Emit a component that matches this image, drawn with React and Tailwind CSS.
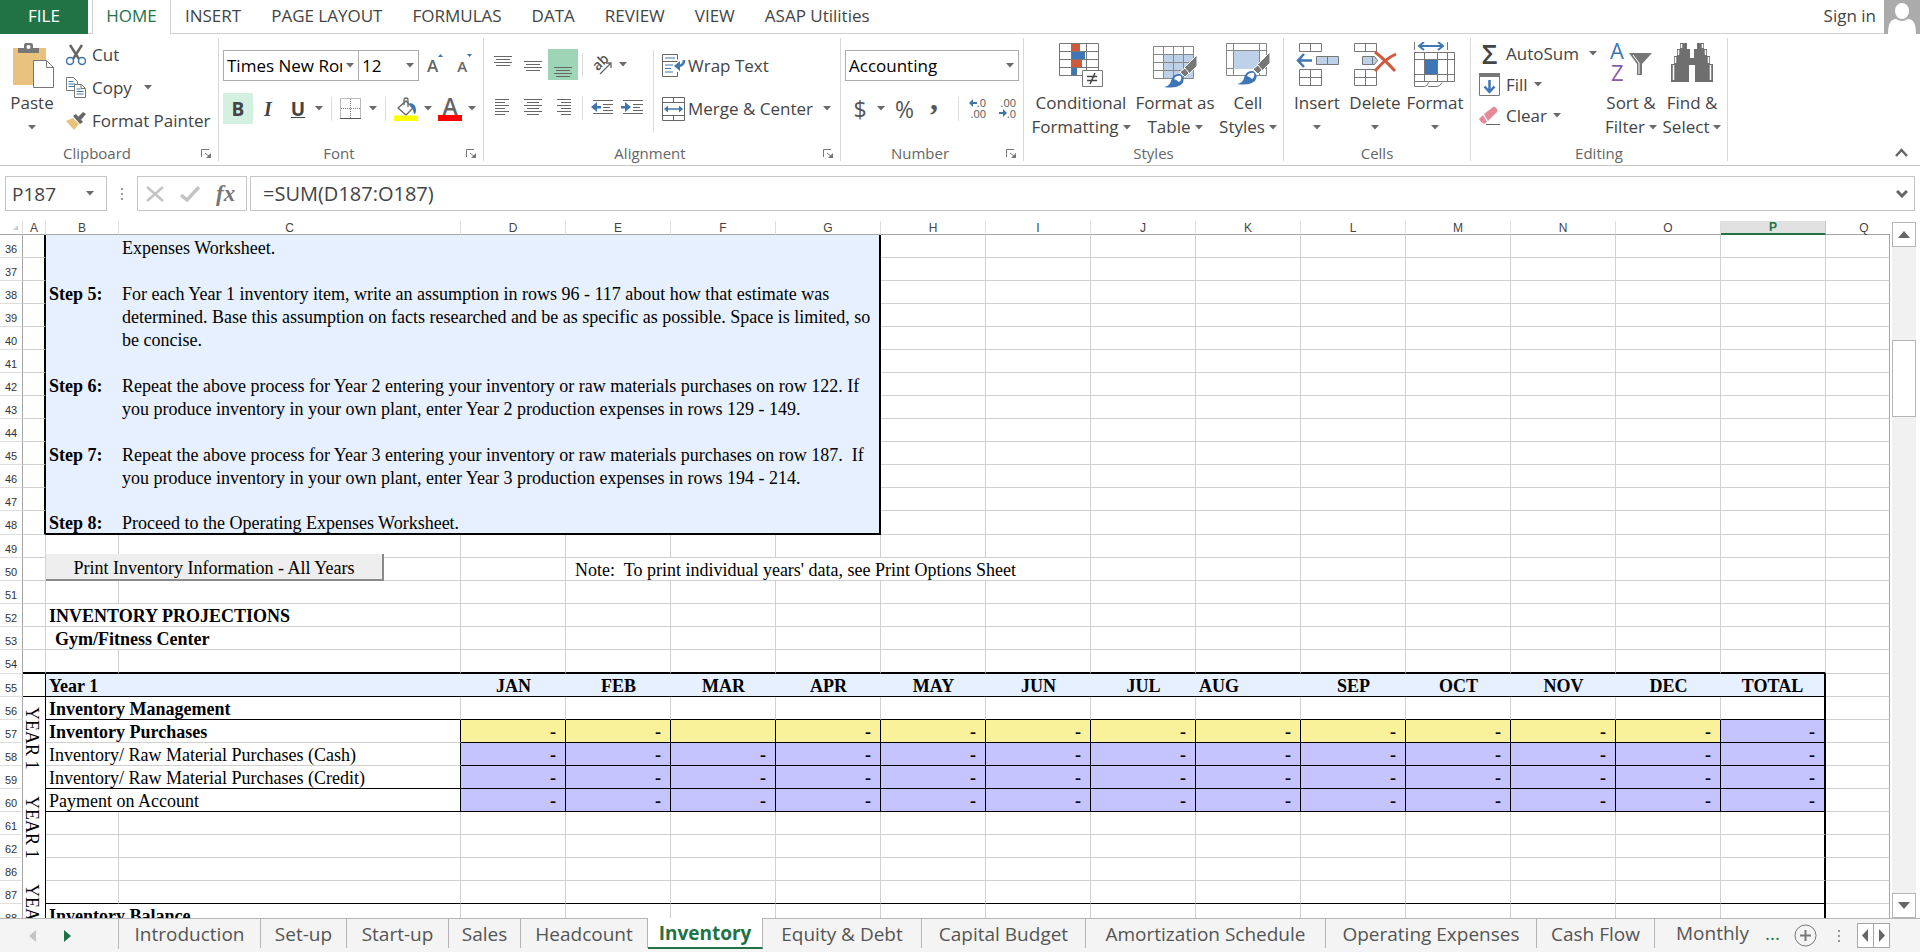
import { useState } from "react";

const ribbonTabs = ["INSERT", "PAGE LAYOUT", "FORMULAS", "DATA", "REVIEW", "VIEW", "ASAP Utilities"];
const columns = ["A", "B", "C", "D", "E", "F", "G", "H", "I", "J", "K", "L", "M", "N", "O", "P", "Q"];
const months = ["JAN", "FEB", "MAR", "APR", "MAY", "JUN", "JUL", "AUG", "SEP", "OCT", "NOV", "DEC", "TOTAL"];

const steps = [
  { row: 36, step: "", text: "Expenses Worksheet." },
  { row: 37, step: "", text: "" },
  { row: 38, step: "Step 5:", text: "For each Year 1 inventory item, write an assumption in rows 96 - 117 about how that estimate was" },
  { row: 39, step: "", text: "determined. Base this assumption on facts researched and be as specific as possible. Space is limited, so" },
  { row: 40, step: "", text: "be concise." },
  { row: 41, step: "", text: "" },
  { row: 42, step: "Step 6:", text: "Repeat the above process for Year 2 entering your inventory or raw materials purchases on row 122. If" },
  { row: 43, step: "", text: "you produce inventory in your own plant, enter Year 2 production expenses in rows 129 - 149." },
  { row: 44, step: "", text: "" },
  { row: 45, step: "Step 7:", text: "Repeat the above process for Year 3 entering your inventory or raw materials purchases on row 187.  If" },
  { row: 46, step: "", text: "you produce inventory in your own plant, enter Year 3 production expenses in rows 194 - 214." },
  { row: 47, step: "", text: "" },
  { row: 48, step: "Step 8:", text: "Proceed to the Operating Expenses Worksheet." },
];

const inventoryRows = [
  { row: 57, label: "Inventory Purchases", bold: true, input: true },
  { row: 58, label: "Inventory/ Raw Material Purchases (Cash)" },
  { row: 59, label: "Inventory/ Raw Material Purchases (Credit)", line: true },
  { row: 60, label: "Payment on Account", line: true },
];

const sheetTabs = [
  { name: "Introduction", width: "w-[142px]" },
  { name: "Set-up", width: "w-[86px]" },
  { name: "Start-up", width: "w-[102px]" },
  { name: "Sales", width: "w-[72px]" },
  { name: "Headcount", width: "w-[127px]" },
  { name: "Inventory", width: "w-[115px]" },
  { name: "Equity & Debt", width: "w-[159px]" },
  { name: "Capital Budget", width: "w-[164px]" },
  { name: "Amortization Schedule", width: "w-[240px]" },
  { name: "Operating Expenses", width: "w-[211px]" },
  { name: "Cash Flow", width: "w-[118px]" },
];

function Caret({ className = "" }) {
  return (
    <svg className={`shrink-0 ${className}`} width="8" height="5" viewBox="0 0 8 5" aria-hidden="true">
      <path d="M0 0h8L4 4.5z" fill="#6a6a6a" />
    </svg>
  );
}

function Divider({ className = "" }) {
  return <span className={`h-6 w-px shrink-0 bg-[#dcdcdc] ${className}`} />;
}

function Launcher() {
  return (
    <button aria-label="More options" className="flex w-6 items-center justify-center">
      <svg width="11" height="11" viewBox="0 0 11 11" fill="none" stroke="#777">
        <path d="M.5 9V1.5H8M4 5l5 4" />
        <path d="M10 5v5H5z" fill="#777" stroke="none" />
      </svg>
    </button>
  );
}

function Group({ name, width, launcher, children }) {
  return (
    <section className={`my-1 flex shrink-0 flex-col border-r border-[#d8d8d8] ${width}`}>
      <div className="flex h-[107px]">{children}</div>
      <div className="flex h-4">
        <span className="flex-1 text-center text-[15px] leading-4 text-[#666]">{name}</span>
        {launcher && <Launcher />}
      </div>
    </section>
  );
}

function BigButton({ icon, lines, width }) {
  return (
    <button className={`flex flex-col items-center pt-1 whitespace-nowrap ${width}`}>
      <span className="flex h-[49px] items-start">{icon}</span>
      <span className="leading-6">{lines[0]}</span>
      <span className="flex h-6 items-center gap-1 leading-6">
        {lines[1]}
        <Caret />
      </span>
    </button>
  );
}

function SmallButton({ icon, children, caret, className = "" }) {
  return (
    <button className={`flex items-center whitespace-nowrap ${className}`}>
      {icon}
      {children}
      {caret && <Caret className={caret} />}
    </button>
  );
}

function Picker({ label, value, width }) {
  return (
    <label className={`relative -ml-px flex h-[31px] items-center border border-[#ababab] bg-white ${width}`}>
      <select
        aria-label={label}
        defaultValue={value}
        className="mr-4 h-full w-full appearance-none overflow-hidden pl-[3px] text-black outline-none"
      >
        <option>{value}</option>
      </select>
      <Caret className="pointer-events-none absolute right-1" />
    </label>
  );
}

/* ---------- icons ---------- */

function PasteIcon() {
  return (
    <svg width="44" height="47" viewBox="0 0 44 47">
      <path d="M3 6h33v37H3z" fill="#e8c27e" />
      <path d="M8 11V6h6V3q0-2 2-2h5q2 0 2 2v3h6v5z" fill="#777" />
      <circle cx="18.500" cy="5" r="2" fill="#fff" />
      <path d="M23.500 18.500h13l7 7v20h-20z" fill="#fff" stroke="#777" />
      <path d="M36.500 18.500v7h7" fill="none" stroke="#777" />
    </svg>
  );
}

function CutIcon() {
  return (
    <svg width="20" height="22" viewBox="0 0 20 22" fill="none">
      <path d="M4 1l9 14M16 1L7 15" stroke="#666" strokeWidth="2.500" />
      <circle cx="4" cy="17" r="3.500" stroke="#3f76ad" strokeWidth="1.500" />
      <circle cx="16" cy="17" r="3.500" stroke="#3f76ad" strokeWidth="1.500" />
    </svg>
  );
}

function CopyIcon() {
  return (
    <svg width="20" height="21" viewBox="0 0 20 21" fill="#fff" stroke="#777">
      <path d="M.5.5h7l4 4v9H.5z" />
      <path d="M2.500 4.500h5M2.500 7h7M2.500 9.500h7" stroke="#3f76ad" />
      <path d="M8.500 7.500h7l4 4v9h-11z" />
      <path d="M15 7.500v4h4" fill="none" />
      <path d="M10.500 12h4M10.500 14.500h7M10.500 17h7" stroke="#3f76ad" />
    </svg>
  );
}

function PainterIcon() {
  return (
    <svg width="20" height="18" viewBox="0 0 20 18">
      <path d="M0 9l7-3 6 6-5 6z" fill="#e8c27e" />
      <path d="M7 4l3-2 7 8-3 2z" fill="#666" />
      <path d="M12 5l5-5 3 2-5 6z" fill="#666" />
    </svg>
  );
}

function BordersIcon() {
  return (
    <svg width="21" height="21" viewBox="0 0 21 21" fill="none" stroke="#777">
      <path d="M.5.5h20v20H.5zM10.500 1v20M1 10.500h20" strokeDasharray="1 1" />
      <path d="M0 20.500h21" stroke="#555" />
    </svg>
  );
}

function FillColorIcon() {
  return (
    <svg width="24" height="24" viewBox="0 0 24 24">
      <path d="M4 11l8-7 7 7-7 7z" fill="#fff" stroke="#666" strokeWidth="1.300" />
      <path d="M10 8V3q0-2 2-2t2 2v7" fill="none" stroke="#666" strokeWidth="1.300" />
      <path d="M16 6q6 1 6 7 0 4-2 4-1-6-4-8z" fill="#3f76ad" />
      <path d="M0 18.500h24V24H0z" fill="#ff0" />
    </svg>
  );
}

const alignShapes = {
  top: "M0 3.500h18M2 6.500h14M0 9.500h18M2 12.500h14",
  middle: "M0 8.500h18M2 11.500h14M0 14.500h18M2 17.500h14",
  bottom: "M0 14.500h18M2 17.500h14M0 20.500h18M2 23.500h14",
  left: "M1 3.500h14M1 6.500h10M1 9.500h14M1 12.500h10M1 15.500h14M1 18.500h10",
  center: "M0 3.500h18M3 6.500h12M0 9.500h18M3 12.500h12M0 15.500h18M3 18.500h12",
  right: "M3 3.500h14M7 6.500h10M3 9.500h14M7 12.500h10M3 15.500h14M7 18.500h10",
};

function AlignButton({ kind, active }) {
  return (
    <button
      aria-label={`Align ${kind}`}
      className={`flex h-[31px] w-[30px] items-center justify-center ${active ? "bg-[#9fd5b7]" : ""}`}
    >
      <svg width="18" height="24" viewBox="0 0 18 24" fill="none" stroke="#666">
        <path d={alignShapes[kind]} />
      </svg>
    </button>
  );
}

function OrientationIcon() {
  return (
    <svg width="22" height="22" viewBox="0 0 22 22">
      <text x="4" y="17" fontSize="14" fontWeight="600" fill="#555" fontFamily="Open Sans, sans-serif" transform="rotate(-45 6 14)">
        ab
      </text>
      <path d="M9 20L20 9M20 14V9h-5" fill="none" stroke="#666" strokeWidth="1.300" />
    </svg>
  );
}

function IndentIcon({ right }) {
  return (
    <svg width="22" height="15" viewBox="0 0 22 15">
      <path d="M2 .5h20M12 4.500h10M12 7.500h7M12 10.500h10M2 13.500h20" stroke="#666" />
      {right ? (
        <path d="M0 6h4V2l6 5-6 5V8.500H0z" fill="#3f76ad" />
      ) : (
        <path d="M10 6H6V2L0 7l6 5V8.500h4z" fill="#3f76ad" />
      )}
    </svg>
  );
}

function WrapIcon() {
  return (
    <svg width="24" height="23" viewBox="0 0 24 23" fill="none" stroke="#666">
      <path d="M15.500 18v4.500H.5V.5h15v5M.5 7.500h15" />
      <path d="M3 4h10M3 11h8M3 14.500h6M3 18h8" stroke="#3f76ad" />
      <path d="M22 6q0 6-6 6" stroke="#3f76ad" strokeWidth="2.500" />
      <path d="M18 7v10l-6-5z" fill="#3f76ad" stroke="none" />
    </svg>
  );
}

function MergeIcon() {
  return (
    <svg width="24" height="24" viewBox="0 0 24 24" fill="none" stroke="#666">
      <path d="M.5.5h22v23H.5zM.5 5.500h22M.5 18.500h22M11.500.5v5M11.500 18.500v5" />
      <path d="M4 12h15" stroke="#3f76ad" strokeWidth="1.500" />
      <path d="M2 12l4-3.500v7zM21 12l-4-3.500v7z" fill="#3f76ad" stroke="none" />
    </svg>
  );
}

function DecimalIcon({ decrease }) {
  const arrow = decrease ? "M0 14h4v-3l4 4-4 4v-3H0z" : "M8 4H4V1L0 5l4 4V6h4z";
  return (
    <svg
      className="overflow-visible"
      width="18"
      height="21"
      viewBox="0 0 18 21"
      fontSize="11"
      fill="#555"
      fontFamily="Open Sans, sans-serif"
    >
      <text x="17" y="9" textAnchor="end">{decrease ? ".00" : ".0"}</text>
      <text x="17" y="20" textAnchor="end">{decrease ? ".0" : ".00"}</text>
      <path d={arrow} fill="#3f76ad" />
    </svg>
  );
}

function ConditionalIcon() {
  return (
    <svg width="44" height="46" viewBox="0 0 44 46">
      <path d="M.5 1.500h39v32H.5zM.5 9.500h39M.5 17.500h39M.5 25.500h39M12.500 1v32M27.500 1v32" fill="none" stroke="#777" />
      <path d="M13 2h8v7h-8zM13 18h10v7H13z" fill="#d0593b" />
      <path d="M13 10h13v7H13zM13 26h5v7h-5z" fill="#3f76b5" />
      <path d="M23.500 28.500h20v16h-20z" fill="#fff" stroke="#777" />
      <path d="M28 34.500h10M28 38.500h10M36 31l-5 11" stroke="#444" strokeWidth="1.500" />
    </svg>
  );
}

function BrushShape() {
  return (
    <>
      <path d="M44 13v11l-8 8-5-6z" fill="#777" stroke="#fff" />
      <path d="M32 26l4 5-4 4-5-5z" fill="#777" stroke="#fff" />
      <path d="M11 45q6-1 7-6 2-8 9-7 6 4 2 10-6 5-18 3z" fill="#3f76b5" />
      <path d="M21 37q2-4 7-3 1 4-2 6-2-2-5-3z" fill="#fff" />
    </>
  );
}

function TableFormatIcon() {
  return (
    <svg width="44" height="46" viewBox="0 0 44 46">
      <path d="M11 13h29v23H11z" fill="#bdd1e8" />
      <path d="M.5 4.500h40v32H.5zM.5 12.500h40M.5 20.500h40M.5 28.500h40M10.500 4v32M20.500 4v32M30.500 4v32" fill="none" stroke="#888" />
      <BrushShape />
    </svg>
  );
}

function CellStylesIcon() {
  return (
    <svg width="44" height="46" viewBox="0 0 44 46">
      <path d="M.5 1.500h40v32H.5zM.5 8.500h40M.5 26.500h40M7.500 1v32M33.500 1v32" fill="none" stroke="#888" />
      <path d="M8 9h25v18H8z" fill="#bdd1e8" />
      <g transform="translate(0 -3)">
        <BrushShape />
      </g>
    </svg>
  );
}

function InsertIcon() {
  return (
    <svg width="43" height="46" viewBox="0 0 43 46" fill="none" stroke="#777">
      <path d="M3.500 1.500h22v8h-22zM14.500 1.500v8M3.500 27.500h22v16h-22zM14.500 27.500v16M3.500 35.500h22" />
      <path d="M20.500 14.500h22v8h-22z" fill="#bdd1e8" />
      <path d="M31.500 14.500v8" />
      <path d="M16 18.500H2M8 12l-6 6.500L8 25" stroke="#3f76b5" strokeWidth="2.500" />
    </svg>
  );
}

function DeleteIcon() {
  return (
    <svg width="43" height="46" viewBox="0 0 43 46" fill="none" stroke="#777">
      <path d="M.5 1.500h22v8H.5zM11.500 1.500v8M.5 27.500h22v16H.5zM11.500 27.500v16M.5 35.500h22" />
      <path d="M8.500 14.500h12l3 4-3 4h-12z" fill="#bdd1e8" />
      <path d="M18.500 14.500v8" />
      <path d="M21 10q8 6 20 19M42 12Q31 17 21 29" stroke="#d0593b" strokeWidth="3" />
    </svg>
  );
}

function FormatIcon() {
  return (
    <svg width="42" height="46" viewBox="0 0 42 46" fill="none" stroke="#777">
      <path d="M.5 0v8M33.500 0v8" />
      <path d="M6 4h22M10 0L5 4l5 4M24 0l5 4-5 4" stroke="#3f76b5" strokeWidth="2" />
      <path d="M.5 10.500h40v29H.5zM.5 17.500h40M.5 32.500h40M10.500 10v29M23.500 10v29M33.500 10v29" />
      <path d="M11 18h12v14H11z" fill="#3f76b5" stroke="none" />
      <path d="M.5 39v5.500h10q3 0 4-4M14 44.500h9q3 0 5-4" />
    </svg>
  );
}

function FillDownIcon() {
  return (
    <svg width="21" height="23" viewBox="0 0 21 23">
      <path d="M.5.5h20v22H.5z" fill="#fff" stroke="#777" />
      <path d="M0 0h21v4H0z" fill="#777" />
      <path d="M10.500 7v12M5.500 13.500l5 5.500 5-5.500" fill="none" stroke="#3f76b5" strokeWidth="2.500" />
    </svg>
  );
}

function EraserIcon() {
  return (
    <svg width="21" height="20" viewBox="0 0 21 20">
      <path d="M5 8l9-7q2-1 4 2 1 2 0 3l-9 9z" fill="#e58a9b" />
      <path d="M4 9l4 7-3 2q-3-1-5-5z" fill="#e58a9b" />
      <path d="M7 18.500h14" stroke="#666" />
    </svg>
  );
}

function SortIcon() {
  return (
    <svg width="44" height="42" viewBox="0 0 44 42" fontFamily="Open Sans, sans-serif" fontSize="22" fontWeight="500">
      <text x="1" y="17" fill="#3f76b5">A</text>
      <text x="2" y="39" fill="#8a5ba6">Z</text>
      <path d="M20 11h23L33 22v11h-5V22z" fill="#777" />
      <path d="M24 13l6 8v11" stroke="#fff" fill="none" />
    </svg>
  );
}

function BinocularsIcon() {
  return (
    <svg width="42" height="41" viewBox="0 0 42 41">
      <path
        d="M9 1h7v6h3v9h4V7h3V1h7v6h3v7h3v8h3v18H24V23h-6v17H0V22h3v-8h3V7h3z"
        fill="#6f6f6f"
      />
      <path d="M10.500 2v4M7.500 8v5M4.500 15v6M2.500 23v15M31.500 2v4M34.500 8v5M37.500 15v6M39.500 23v15" stroke="#fff" strokeWidth="1.500" />
    </svg>
  );
}

/* ---------- ribbon ---------- */

function TabStrip() {
  return (
    <header className="flex h-[34px] items-stretch border-b border-[#d0d0d0]">
      <button className="-mb-px w-[88px] bg-[#217346] pb-0.5 text-white">FILE</button>
      <button className="-mb-px ml-1 w-[79px] border-x border-[#d0d0d0] bg-white pb-0.5 text-[#217346]">HOME</button>
      <nav className="flex gap-[30px] pb-0.5 pl-3.5">
        {ribbonTabs.map((tab) => (
          <button key={tab} className="whitespace-nowrap">{tab}</button>
        ))}
      </nav>
      <button className="ml-auto pb-0.5 pr-2">Sign in</button>
      <svg className="-mb-px" width="36" height="34" viewBox="0 0 36 34" aria-label="Account">
        <path d="M0 0h36v34H0z" fill="#ababab" />
        <ellipse cx="18" cy="11" rx="7" ry="8" fill="#fff" />
        <path d="M4 34q0-15 8-15 6 4 12 0 8 0 8 15z" fill="#fff" />
      </svg>
    </header>
  );
}

function Ribbon() {
  return (
    <div className="flex border-b border-[#c6c6c6]">
      <Group name="Clipboard" width="w-[219px]" launcher>
        <BigButton icon={<PasteIcon />} lines={["Paste", ""]} width="w-16" />
        <div className="flex flex-col pl-0.5">
          <SmallButton icon={<CutIcon />} className="h-[33px] gap-1.5">Cut</SmallButton>
          <SmallButton icon={<CopyIcon />} caret="ml-1.5" className="h-[33px] gap-1.5">Copy</SmallButton>
          <SmallButton icon={<PainterIcon />} className="h-[33px] gap-1.5">Format Painter</SmallButton>
        </div>
      </Group>

      <Group name="Font" width="w-[265px]" launcher>
        <div className="flex flex-col gap-3 pl-1 pt-3">
          <div className="flex h-[31px] items-center pl-px">
            <Picker label="Font" value="Times New Roman" width="w-[136px]" />
            <Picker label="Font size" value="12" width="w-[61px]" />
            <button aria-label="Grow font" className="ml-2 flex items-start font-semibold text-[#666]">
              A
              <svg width="5" height="3" viewBox="0 0 5 3"><path d="M0 3h5L2.500 0z" fill="#3f76ad" /></svg>
            </button>
            <button aria-label="Shrink font" className="ml-3.5 flex items-start text-[15px] font-semibold text-[#666]">
              A
              <svg width="5" height="3" viewBox="0 0 5 3"><path d="M0 0h5L2.500 3z" fill="#3f76ad" /></svg>
            </button>
          </div>
          <div className="flex h-[31px] items-center">
            <button className="h-[31px] w-[30px] bg-[#d3f0e0] text-[19px] font-bold">B</button>
            <button className="w-[30px] font-['Liberation_Serif',serif] text-[20px] font-bold italic">I</button>
            <button className="w-[30px] text-[19px] font-bold underline">U</button>
            <Caret className="ml-0.5" />
            <Divider className="ml-2" />
            <button aria-label="Borders" className="ml-2"><BordersIcon /></button>
            <Caret className="ml-2" />
            <Divider className="ml-2" />
            <button aria-label="Fill color" className="ml-2"><FillColorIcon /></button>
            <Caret className="ml-1.5" />
            <button
              aria-label="Font color"
              className="ml-1.5 h-6 w-6 border-b-[6px] border-[#f00] text-[23px] font-semibold leading-[18px] text-[#666]"
            >
              A
            </button>
            <Caret className="ml-1.5" />
          </div>
        </div>
      </Group>

      <Group name="Alignment" width="w-[357px]" launcher>
        <div className="flex w-[169px] flex-col gap-3 pl-1 pt-[11px]">
          <div className="flex h-[31px] items-center">
            <AlignButton kind="top" />
            <AlignButton kind="middle" />
            <AlignButton kind="bottom" active />
            <Divider className="ml-1" />
            <button aria-label="Orientation" className="ml-2"><OrientationIcon /></button>
            <Caret className="ml-1.5" />
          </div>
          <div className="flex h-[31px] items-center">
            <AlignButton kind="left" />
            <AlignButton kind="center" />
            <AlignButton kind="right" />
            <Divider className="ml-1" />
            <button aria-label="Decrease indent" className="ml-2"><IndentIcon /></button>
            <button aria-label="Increase indent" className="ml-2"><IndentIcon right /></button>
          </div>
        </div>
        <div className="my-3 flex flex-col gap-3 border-l border-[#dcdcdc] pl-2">
          <SmallButton icon={<WrapIcon />} className="h-[31px] gap-0.5">Wrap Text</SmallButton>
          <SmallButton icon={<MergeIcon />} caret="ml-2" className="h-[31px] gap-0.5">Merge &amp; Center</SmallButton>
        </div>
      </Group>

      <Group name="Number" width="w-[183px]" launcher>
        <div className="flex flex-col gap-3 pl-1 pt-3">
          <div className="flex pl-px">
            <Picker label="Number format" value="Accounting" width="w-[174px]" />
          </div>
          <div className="flex h-[31px] items-center text-[#555]">
            <button className="w-[30px] text-[23px] leading-6">$</button>
            <Caret className="ml-0.5" />
            <button className="ml-2 w-[23px] text-[23px] leading-6">%</button>
            <button className="ml-2.5 w-4 pb-5 font-['Liberation_Serif',serif] text-[32px] font-bold leading-6">,</button>
            <Divider className="ml-4" />
            <button aria-label="Increase decimal" className="ml-2.5"><DecimalIcon /></button>
            <button aria-label="Decrease decimal" className="ml-3"><DecimalIcon decrease /></button>
          </div>
        </div>
      </Group>

      <Group name="Styles" width="w-[260px]">
        <div className="flex pl-[3px]">
          <BigButton icon={<ConditionalIcon />} lines={["Conditional", "Formatting"]} width="w-[108px]" />
          <BigButton icon={<TableFormatIcon />} lines={["Format as", "Table"]} width="w-[80px]" />
          <BigButton icon={<CellStylesIcon />} lines={["Cell", "Styles"]} width="w-[66px]" />
        </div>
      </Group>

      <Group name="Cells" width="w-[187px]">
        <div className="flex pl-[5px]">
          <BigButton icon={<InsertIcon />} lines={["Insert", ""]} width="w-[56px]" />
          <BigButton icon={<DeleteIcon />} lines={["Delete", ""]} width="w-[60px]" />
          <BigButton icon={<FormatIcon />} lines={["Format", ""]} width="w-[60px]" />
        </div>
      </Group>

      <Group name="Editing" width="w-[257px]">
        <div className="flex w-[130px] flex-col pl-2">
          <SmallButton
            icon={<span className="w-[21px] text-[27px] font-semibold leading-6">Σ</span>}
            caret="ml-1"
            className="h-[31px] gap-1.5"
          >
            AutoSum
          </SmallButton>
          <SmallButton icon={<FillDownIcon />} caret="ml-0" className="h-[31px] gap-1.5">Fill</SmallButton>
          <SmallButton icon={<EraserIcon />} caret="ml-0" className="h-[31px] gap-1.5">Clear</SmallButton>
        </div>
        <BigButton icon={<SortIcon />} lines={["Sort &", "Filter"]} width="w-[60px]" />
        <BigButton icon={<BinocularsIcon />} lines={["Find &", "Select"]} width="w-[62px]" />
      </Group>

      <button aria-label="Collapse ribbon" className="mb-2 ml-auto mr-3 self-end">
        <svg width="13" height="9" viewBox="0 0 13 9" fill="none" stroke="#666" strokeWidth="2.500">
          <path d="M1 8l5.500-6L12 8" />
        </svg>
      </button>
    </div>
  );
}

function FormulaBar() {
  const [formula, setFormula] = useState("=SUM(D187:O187)");

  return (
    <div className="flex h-[55px] items-start pl-[5px] pr-[5px] pt-2.5 text-[#444]">
      <div className="flex h-[35px] w-[102px] items-center border border-[#c6c6c6]">
        <input aria-label="Name box" defaultValue="P187" className="w-20 pl-1.5 text-[19px] outline-none" />
        <Caret />
      </div>
      <svg className="mx-[13px] mt-3" width="4" height="12" viewBox="0 0 4 12" fill="#999">
        <path d="M1 0h2v2H1zM1 5h2v2H1zM1 10h2v2H1z" />
      </svg>
      <div className="flex h-[35px] w-[110px] items-center gap-4 border border-[#c6c6c6] pl-2">
        <button aria-label="Cancel">
          <svg width="18" height="16" viewBox="0 0 18 16" stroke="#c4c4c4" strokeWidth="2.500">
            <path d="M1 1l16 14M17 1L1 15" />
          </svg>
        </button>
        <button aria-label="Enter">
          <svg width="20" height="16" viewBox="0 0 20 16" fill="none" stroke="#c4c4c4" strokeWidth="3.500">
            <path d="M1 9l6 5L19 1" />
          </svg>
        </button>
        <button className="font-['Liberation_Serif',serif] text-[23px] font-bold italic leading-6 text-[#777]">fx</button>
      </div>
      <div className="ml-[3px] flex h-[35px] flex-1 items-center border border-[#c6c6c6] pr-1.5">
        <input
          aria-label="Formula"
          value={formula}
          onChange={(e) => setFormula(e.target.value)}
          className="flex-1 pl-3 text-[20px] outline-none"
        />
        <svg width="12" height="8" viewBox="0 0 12 8" fill="none" stroke="#666" strokeWidth="3">
          <path d="M1 1l5 5 5-5" />
        </svg>
      </div>
    </div>
  );
}

/* ---------- sheet ---------- */

function RowHead({ children }) {
  return (
    <th className="border-b border-r border-b-[#dedede] border-r-[#a6a6a6] pt-[5px] text-center font-['Liberation_Sans',sans-serif] text-[11px] font-normal leading-4 text-[#333]">
      {children}
    </th>
  );
}

function Blanks({ count, className = "border-b border-r border-[#d0d0d0]" }) {
  return Array.from({ length: count }, (_, i) => <td key={i} className={className} />);
}

function LastCell() {
  return <td className="border-b border-r border-b-[#d0d0d0] border-r-[#a6a6a6]" />;
}

function columnHeadClass(c) {
  if (c === "P") {
    return "border-b-2 border-r border-b-[#217346] border-r-[#c6c6c6] bg-[#e1e1e1] font-bold text-[#217346]";
  }
  if (c === "Q") {
    return "border-b border-b-[#a6a6a6] pl-3 font-normal";
  }
  return "border-b border-r border-b-[#a6a6a6] border-r-[#dedede] font-normal";
}

function Sheet() {
  return (
    <table className="w-full table-fixed border-separate border-spacing-0 whitespace-nowrap font-['Liberation_Serif',serif] text-[18px] leading-5 text-black">
      <colgroup>
        <col className="w-[23px]" />
        <col className="w-[23px]" />
        <col className="w-[73px]" />
        <col className="w-[342px]" />
        {months.map((m) => (
          <col key={m} className="w-[105px]" />
        ))}
        <col />
      </colgroup>
      <thead className="font-['Liberation_Sans',sans-serif] text-[12px] leading-3 text-[#444]">
        <tr className="h-[14px]">
          <th className="border-b border-r border-b-[#a6a6a6] border-r-[#dedede]">
            <svg className="ml-auto mr-1" width="5" height="5" viewBox="0 0 5 5">
              <path d="M5 0v5H0z" fill="#ccc" />
            </svg>
          </th>
          {columns.map((c) => (
            <th key={c} className={columnHeadClass(c)}>
              {c}
            </th>
          ))}
        </tr>
      </thead>
      <tbody className="[&_td]:pt-0.5">
        {steps.map(({ row, step, text }) => {
          const edge = row === 48 ? "border-b-2 border-b-black" : "";
          return (
            <tr key={row} className={row === 48 ? "h-6" : "h-[23px]"}>
              <RowHead>{row}</RowHead>
              <td className="border-b border-r-2 border-b-[#d0d0d0] border-r-black" />
              <td className={`bg-[#e6f0ff] pl-[3px] font-bold ${edge}`}>{step}</td>
              <td colSpan={5} className={`whitespace-pre border-r-2 border-r-black bg-[#e6f0ff] pl-[3px] ${edge}`}>
                {text}
              </td>
              <Blanks count={9} />
              <LastCell />
            </tr>
          );
        })}

        <tr className="h-[23px]">
          <RowHead>49</RowHead>
          <Blanks count={16} />
          <LastCell />
        </tr>
        <tr className="h-[23px]">
          <RowHead>50</RowHead>
          <Blanks count={1} />
          <td colSpan={2} className="relative border-b border-r border-[#d0d0d0]">
            <button className="absolute -top-1 left-0 h-[27px] w-[338px] border-b-2 border-r-2 border-[#8a8a8a] bg-[#eee] pt-0.5">
              Print Inventory Information - All Years
            </button>
          </td>
          <Blanks count={1} />
          <td colSpan={5} className="whitespace-pre border-b border-r border-[#d0d0d0] pl-[9px]">
            Note:  To print individual years' data, see Print Options Sheet
          </td>
          <Blanks count={7} />
          <LastCell />
        </tr>
        <tr className="h-[23px]">
          <RowHead>51</RowHead>
          <Blanks count={16} />
          <LastCell />
        </tr>
        <tr className="h-[23px]">
          <RowHead>52</RowHead>
          <Blanks count={1} />
          <td colSpan={2} className="border-b border-r border-[#d0d0d0] pl-[3px] font-bold">INVENTORY PROJECTIONS</td>
          <Blanks count={13} />
          <LastCell />
        </tr>
        <tr className="h-[23px]">
          <RowHead>53</RowHead>
          <Blanks count={1} />
          <td colSpan={2} className="border-b border-r border-[#d0d0d0] pl-[9px] font-bold">Gym/Fitness Center</td>
          <Blanks count={13} />
          <LastCell />
        </tr>
        <tr className="h-6">
          <RowHead>54</RowHead>
          <Blanks count={16} className="border-b-2 border-r border-b-black border-r-[#d0d0d0]" />
          <LastCell />
        </tr>

        <tr className="h-[23px] font-bold">
          <RowHead>55</RowHead>
          <td className="border-b border-r border-black" />
          <td colSpan={2} className="border-b border-black bg-[#e6f0ff] pl-[3px]">Year 1</td>
          {months.map((m) => (
            <td
              key={m}
              className={`border-b border-black bg-[#e6f0ff] ${m === "AUG" ? "pl-[3px] text-left" : "text-center"} ${
                m === "TOTAL" ? "border-r-2" : ""
              }`}
            >
              {m}
            </td>
          ))}
          <LastCell />
        </tr>
        <tr className="h-[23px]">
          <RowHead>56</RowHead>
          <td rowSpan={10} className="border-r border-black align-top">
            <div className="flex h-[226px] gap-[26px] overflow-hidden pr-1 pt-2 leading-[18px] [writing-mode:vertical-rl]">
              <span>YEAR 1</span>
              <span>YEAR 1</span>
              <span>YEAR 1</span>
            </div>
          </td>
          <td colSpan={2} className="border-b border-r border-b-black border-r-[#d0d0d0] pl-[3px] font-bold">
            Inventory Management
          </td>
          <Blanks count={12} className="border-b border-r border-b-black border-r-[#d0d0d0]" />
          <Blanks count={1} className="border-b border-r-2 border-black" />
          <LastCell />
        </tr>

        {inventoryRows.map(({ row, label, bold, input, line }) => (
          <tr key={row} className="h-[23px]">
            <RowHead>{row}</RowHead>
            <td
              colSpan={2}
              className={`border-b border-r border-r-black pl-[3px] ${bold ? "font-bold" : ""} ${
                line ? "border-b-black" : "border-b-[#d0d0d0]"
              }`}
            >
              {label}
            </td>
            {months.map((m) => (
              <td
                key={m}
                className={`border-b border-black pr-[9px] text-right font-bold ${m === "TOTAL" ? "border-r-2" : "border-r"} ${
                  input && m !== "TOTAL" ? "bg-[#f9f29b]" : "bg-[#c6c4ff]"
                }`}
              >
                {input && m === "MAR" ? "" : "-"}
              </td>
            ))}
            <LastCell />
          </tr>
        ))}

        {[61, 62, 86].map((row) => (
          <tr key={row} className="h-[23px]">
            <RowHead>{row}</RowHead>
            <Blanks count={14} />
            <Blanks count={1} className="border-b border-r-2 border-b-[#d0d0d0] border-r-black" />
            <LastCell />
          </tr>
        ))}
        <tr className="h-[23px]">
          <RowHead>87</RowHead>
          <Blanks count={14} className="border-b border-r border-b-black border-r-[#d0d0d0]" />
          <Blanks count={1} className="border-b border-r-2 border-black" />
          <LastCell />
        </tr>
        <tr className="h-[23px]">
          <RowHead>88</RowHead>
          <td colSpan={2} className="border-b border-r border-[#d0d0d0] pl-[3px] font-bold">Inventory Balance</td>
          <Blanks count={12} />
          <Blanks count={1} className="border-b border-r-2 border-b-[#d0d0d0] border-r-black" />
          <LastCell />
        </tr>
      </tbody>
    </table>
  );
}

function ScrollBar() {
  return (
    <div className="flex w-[30px] shrink-0 flex-col bg-white pl-0.5 pr-1 pt-px">
      <button aria-label="Scroll up" className="flex h-[25px] items-center justify-center border border-[#b5b5b5]">
        <svg width="12" height="7" viewBox="0 0 12 7"><path d="M0 7h12L6 0z" fill="#666" /></svg>
      </button>
      <div className="flex flex-1 flex-col bg-[#f1f1f1] pt-[93px]">
        <div className="h-[77px] border border-[#b5b5b5] bg-white" />
      </div>
      <button aria-label="Scroll down" className="flex h-[25px] items-center justify-center border border-[#b5b5b5]">
        <svg width="12" height="7" viewBox="0 0 12 7"><path d="M0 0h12L6 7z" fill="#666" /></svg>
      </button>
    </div>
  );
}

function SheetTabs() {
  const [active, setActive] = useState("Inventory");

  return (
    <footer className="flex h-[34px] shrink-0 items-start border-t border-[#b5b5b5] bg-[#f4f4f4] text-[19px] text-[#555]">
      <div className="flex h-[33px] w-[118px] shrink-0 items-center gap-7 pl-[29px]">
        <button aria-label="Previous sheet">
          <svg width="7" height="12" viewBox="0 0 7 12"><path d="M7 0v12L0 6z" fill="#c4c4c4" /></svg>
        </button>
        <button aria-label="Next sheet">
          <svg width="7" height="12" viewBox="0 0 7 12"><path d="M0 0v12l7-6z" fill="#1e7145" /></svg>
        </button>
      </div>
      <nav className="flex border-l border-[#b5b5b5]">
        {sheetTabs.map(({ name, width }) => (
          <button
            key={name}
            onClick={() => setActive(name)}
            className={`shrink-0 whitespace-nowrap ${width} ${
              name === active
                ? "relative -mt-px h-[31px] border-b-2 border-r border-b-[#217346] border-r-[#b5b5b5] bg-white font-bold leading-7 text-[#217346]"
                : "h-[29px] border-r border-[#b5b5b5] leading-7"
            }`}
          >
            {name}
          </button>
        ))}
      </nav>
      <button className="ml-[21px] leading-7">Monthly</button>
      <div className="ml-auto flex h-[33px] items-center pr-[30px]">
        <span className="self-start leading-7 text-[#217346]">...</span>
        <button aria-label="New sheet" className="ml-3.5">
          <svg width="23" height="23" viewBox="0 0 23 23" fill="none" stroke="#777">
            <circle cx="11.500" cy="11.500" r="10.500" />
            <path d="M6 11.500h11M11.500 6v11" strokeWidth="2" />
          </svg>
        </button>
        <svg className="ml-5" width="4" height="12" viewBox="0 0 4 12" fill="#999">
          <path d="M1 0h2v2H1zM1 5h2v2H1zM1 10h2v2H1z" />
        </svg>
        <div className="ml-4 flex h-[25px] border border-[#a6a6a6] bg-white">
          <button aria-label="Scroll left" className="w-4 border-r border-[#a6a6a6] pl-1">
            <svg width="6" height="13" viewBox="0 0 6 13"><path d="M6 0v13L0 6.500z" fill="#666" /></svg>
          </button>
          <button aria-label="Scroll right" className="w-[15px] pl-[5px]">
            <svg width="6" height="13" viewBox="0 0 6 13"><path d="M0 0v13l6-6.500z" fill="#666" /></svg>
          </button>
        </div>
      </div>
    </footer>
  );
}

export default function App() {
  return (
    <div className="flex h-screen flex-col overflow-hidden bg-white font-['Open_Sans',sans-serif] text-[17px] leading-6 text-[#444]">
      <TabStrip />
      <Ribbon />
      <FormulaBar />
      <main className="flex min-h-0 flex-1">
        <div className="min-w-0 flex-1 overflow-hidden">
          <Sheet />
        </div>
        <ScrollBar />
      </main>
      <SheetTabs />
    </div>
  );
}
